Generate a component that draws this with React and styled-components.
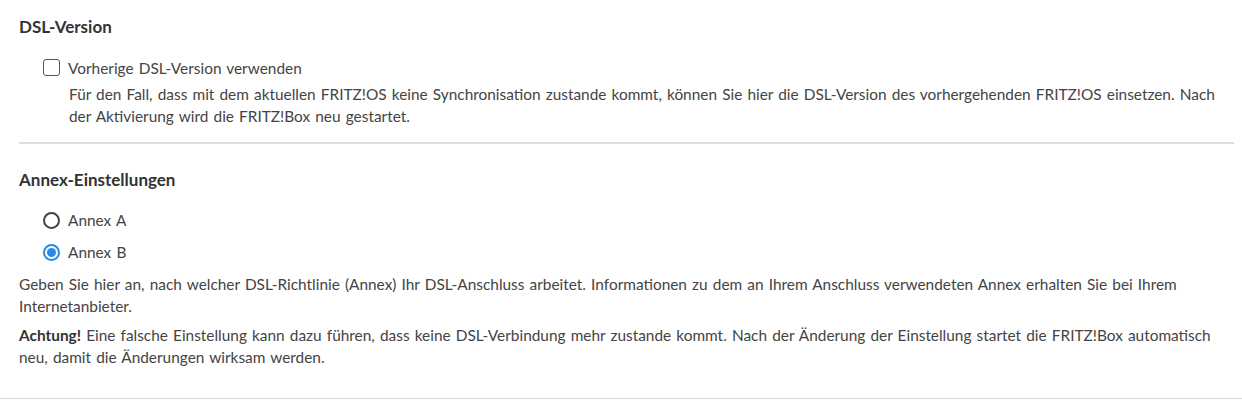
import React, { useState } from "react";
import styled, { createGlobalStyle } from "styled-components";

const GlobalStyle = createGlobalStyle`
  html, body {
    margin: 0;
    padding: 0;
    background: #ffffff;
  }
  body {
    font-family: Lato, "Liberation Sans", sans-serif;
    color: #444444;
    word-spacing: 1.2px;
    -webkit-font-smoothing: antialiased;
  }
`;

const Page = styled.div`
  width: 1242px;
  height: 399px;
  box-sizing: border-box;
  border-bottom: 1px solid #d6d6d6;
  padding: 14px 8px 0 19px;
`;

const Section = styled.section`
  padding-bottom: ${(p) => (p.last ? "0" : "15px")};
  border-bottom: ${(p) => (p.last ? "none" : "2px solid #dedede")};
  margin-bottom: ${(p) => (p.last ? "0" : "23px")};
`;

const Heading = styled.h3`
  margin: 0 0 12px 0;
  font-size: 17px;
  font-weight: 700;
  line-height: 26px;
  color: #333333;
  word-spacing: 0;
`;

const OptionRow = styled.label`
  display: flex;
  align-items: center;
  gap: 8px;
  height: ${(p) => (p.compact ? "31px" : "32px")};
  padding-left: 24px;
  font-size: 15.4px;
  color: #444444;
  cursor: pointer;
`;

const Box = styled.span`
  width: 17px;
  height: 17px;
  box-sizing: border-box;
  border: 1.5px solid #555555;
  border-radius: 3px;
  background: #fff;
`;

const Radio = styled.span`
  width: 17px;
  height: 17px;
  box-sizing: border-box;
  border-radius: 50%;
  border: 2px solid ${(p) => (p.checked ? "#2a8ae2" : "#444444")};
  display: flex;
  align-items: center;
  justify-content: center;
  &::after {
    content: "";
    width: 9px;
    height: 9px;
    border-radius: 50%;
    background: ${(p) => (p.checked ? "#2a8ae2" : "transparent")};
  }
`;

const Hint = styled.p`
  margin: 0 0 0 50px;
  font-size: 15.4px;
  line-height: 22px;
  color: #444444;
`;

const Text = styled.p`
  margin: 0 0 7px 0;
  font-size: 15.4px;
  line-height: 22px;
  color: #444444;
  strong {
    font-weight: 700;
    color: #333333;
  }
`;

const Options = styled.div`
  margin: -1px 0 5px 0;
`;

export default function App() {
  const [annex, setAnnex] = useState("B");
  const [prev, setPrev] = useState(false);

  return (
    <Page>
      <GlobalStyle />
      <Section>
        <Heading>DSL-Version</Heading>
        <OptionRow compact onClick={() => setPrev(!prev)}>
          <Box />
          Vorherige DSL-Version verwenden
        </OptionRow>
        <Hint>
          Für den Fall, dass mit dem aktuellen FRITZ!OS keine Synchronisation
          zustande kommt, können Sie hier die DSL-Version des vorhergehenden
          FRITZ!OS einsetzen. Nach
          <br />
          der Aktivierung wird die FRITZ!Box neu gestartet.
        </Hint>
      </Section>
      <Section last>
        <Heading>Annex-Einstellungen</Heading>
        <Options>
          <OptionRow onClick={() => setAnnex("A")}>
            <Radio checked={annex === "A"} />
            Annex A
          </OptionRow>
          <OptionRow onClick={() => setAnnex("B")}>
            <Radio checked={annex === "B"} />
            Annex B
          </OptionRow>
        </Options>
        <Text>
          Geben Sie hier an, nach welcher DSL-Richtlinie (Annex) Ihr
          DSL-Anschluss arbeitet. Informationen zu dem an Ihrem Anschluss
          verwendeten Annex erhalten Sie bei Ihrem
          <br />
          Internetanbieter.
        </Text>
        <Text>
          <strong>Achtung!</strong> Eine falsche Einstellung kann dazu führen,
          dass keine DSL-Verbindung mehr zustande kommt. Nach der Änderung der
          Einstellung startet die FRITZ!Box automatisch
          <br />
          neu, damit die Änderungen wirksam werden.
        </Text>
      </Section>
    </Page>
  );
}
